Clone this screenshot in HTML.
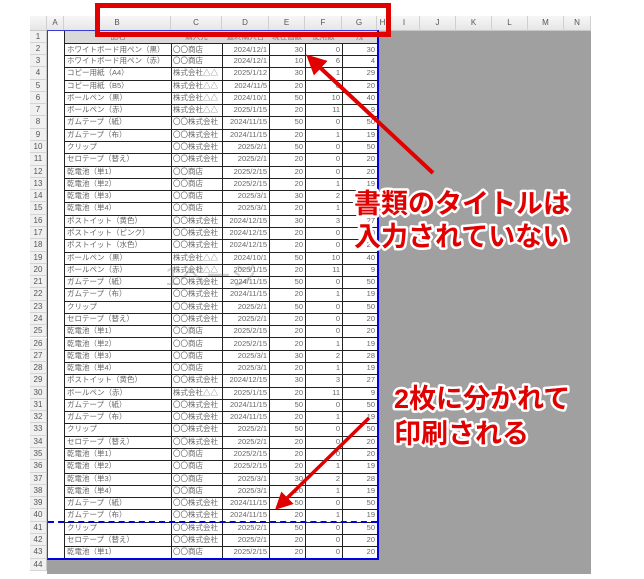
<!DOCTYPE html>
<html><head><meta charset="utf-8">
<style>
html,body{margin:0;padding:0;width:644px;height:579px;overflow:hidden;background:#fff;font-family:"Liberation Sans","Noto Sans CJK JP",sans-serif;}
#sheet{position:absolute;left:30px;top:16px;width:561px;height:558px;background:#fff;}
.abs{position:absolute;box-sizing:border-box;}
.ch{background:linear-gradient(#f7f7f7,#e6e6e6);border-right:1px solid #d0d0d0;border-bottom:1px solid #c8c8c8;font-size:8px;color:#555;text-align:center;line-height:14px;}
.rh{background:#f0f0f0;border-bottom:1px solid #d4d4d4;border-right:1px solid #c8c8c8;font-size:8px;color:#555;text-align:center;}
.c{font-size:7.5px;color:#666;white-space:nowrap;overflow:hidden;border-right:1px solid #222;border-bottom:1px solid #222;padding:0 2px;}
.r{text-align:right;}
</style></head><body>
<div id="sheet"></div>
<div class="abs" style="left:379px;top:30px;width:212px;height:544px;background:#a0a0a0"></div>
<div class="abs" style="left:47px;top:559px;width:544px;height:15px;background:#a0a0a0"></div>
<div id="cells"></div>
<div class="abs" style="left:47px;top:30px;width:332px;height:530px;border-left:1px solid #3b3bd6;border-top:1px solid #3b3bd6;border-right:2px solid #0000e0;border-bottom:2px solid #0000e0"></div>
<div class="abs" style="left:48px;top:521px;width:329px;height:0;border-top:2px dashed #0000e0"></div>
<div class="abs" style="left:165px;top:256px;font-size:26px;color:rgba(120,120,120,.35)">1ページ</div>
<div class="abs" style="left:95px;top:3px;width:296px;height:34px;border:5px solid #e00000"></div>
<svg class="abs" style="left:0;top:0" width="644" height="579">
<defs><marker id="ah" markerWidth="5" markerHeight="5" refX="3" refY="2.5" orient="auto"><path d="M0,0 L5,2.5 L0,5 Z" fill="#e00000"/></marker></defs>
<line x1="433" y1="173" x2="312" y2="60" stroke="#e00000" stroke-width="4" marker-end="url(#ah)"/>
<line x1="369" y1="418" x2="280" y2="505" stroke="#e00000" stroke-width="3.5" marker-end="url(#ah)"/>
<g font-family="Liberation Sans,Noto Sans CJK JP,sans-serif" font-size="27" font-weight="bold" fill="#e00000" stroke="#fff" stroke-width="5" paint-order="stroke" stroke-linejoin="round">
<text x="354" y="213">書類のタイトルは</text>
<text x="354" y="246">入力されていない</text>
<text x="394" y="408">2枚に分かれて</text>
<text x="394" y="443">印刷される</text>
</g>
</svg>
<script>
var cols=[["",30,47],["A",47,64],["B",64,171],["C",171,222],["D",222,269],["E",269,305],["F",305,342],["G",342,377],["H",377,389],["I",389,420],["J",420,456],["K",456,492],["L",492,528],["M",528,564],["N",564,591]];
var h="";
cols.forEach(function(c){h+='<div class="abs ch" style="left:'+c[1]+'px;top:16px;width:'+(c[2]-c[1])+'px;height:15px">'+c[0]+'</div>';});
var S="〇〇商店",K="〇〇株式会社",T="株式会社△△";
var base=[["ボールペン（黒）",T,"2024/10/1",50,10,40],["ボールペン（赤）",T,"2025/1/15",20,11,9],["ガムテープ（紙）",K,"2024/11/15",50,0,50],["ガムテープ（布）",K,"2024/11/15",20,1,19],["クリップ",K,"2025/2/1",50,0,50],["セロテープ（替え）",K,"2025/2/1",20,0,20],["乾電池（単1）",S,"2025/2/15",20,0,20],["乾電池（単2）",S,"2025/2/15",20,1,19],["乾電池（単3）",S,"2025/3/1",30,2,28],["乾電池（単4）",S,"2025/3/1",20,1,19],["ポストイット（黄色）",K,"2024/12/15",30,3,27]];
var rows=[["品名","購入先","最終購入日","現在個数","使用数","残"],["ホワイトボード用ペン（黒）",S,"2024/12/1",30,0,30],["ホワイトボード用ペン（赤）",S,"2024/12/1",10,6,4],["コピー用紙（A4）",T,"2025/1/12",30,1,29],["コピー用紙（B5）",T,"2024/11/5",20,0,20]];
base.forEach(function(b){rows.push(b)});
rows.push(["ポストイット（ピンク）",K,"2024/12/15",20,0,20],["ポストイット（水色）",K,"2024/12/15",20,0,20]);
base.slice(0,11).forEach(function(b){rows.push(b)});
base.slice(1,10).forEach(function(b){rows.push(b)});
rows.push(base[2],base[3],base[4],base[5],base[6]);
rows=rows.slice(0,43);
for(var n=1;n<=44;n++){
 var t=30.5+(n-1)*12.28;
 h+='<div class="abs rh" style="left:30px;top:'+t+'px;width:17px;height:12.28px;line-height:12px">'+n+'</div>';
 if(n<=43){
  var r=rows[n-1];
  for(var k=0;k<6;k++){
   var c=cols[k+2];var st='left:'+c[1]+'px;top:'+t+'px;width:'+(c[2]-c[1]+1)+'px;height:13.28px;line-height:12px;';
   if(k==0)st+='border-left:1px solid #222;';
   if(n==1)st+='background:#d9d9d9;text-align:center;color:#777;';
   if(n==2)st+='border-top:1px solid #222;';
   var cls='abs c'+((k>=2&&n>1)?' r':'');
   h+='<div class="'+cls+'" style="'+st+'">'+r[k]+'</div>';
  }
 }
}
document.getElementById('cells').innerHTML=h;
</script>
</body></html>
